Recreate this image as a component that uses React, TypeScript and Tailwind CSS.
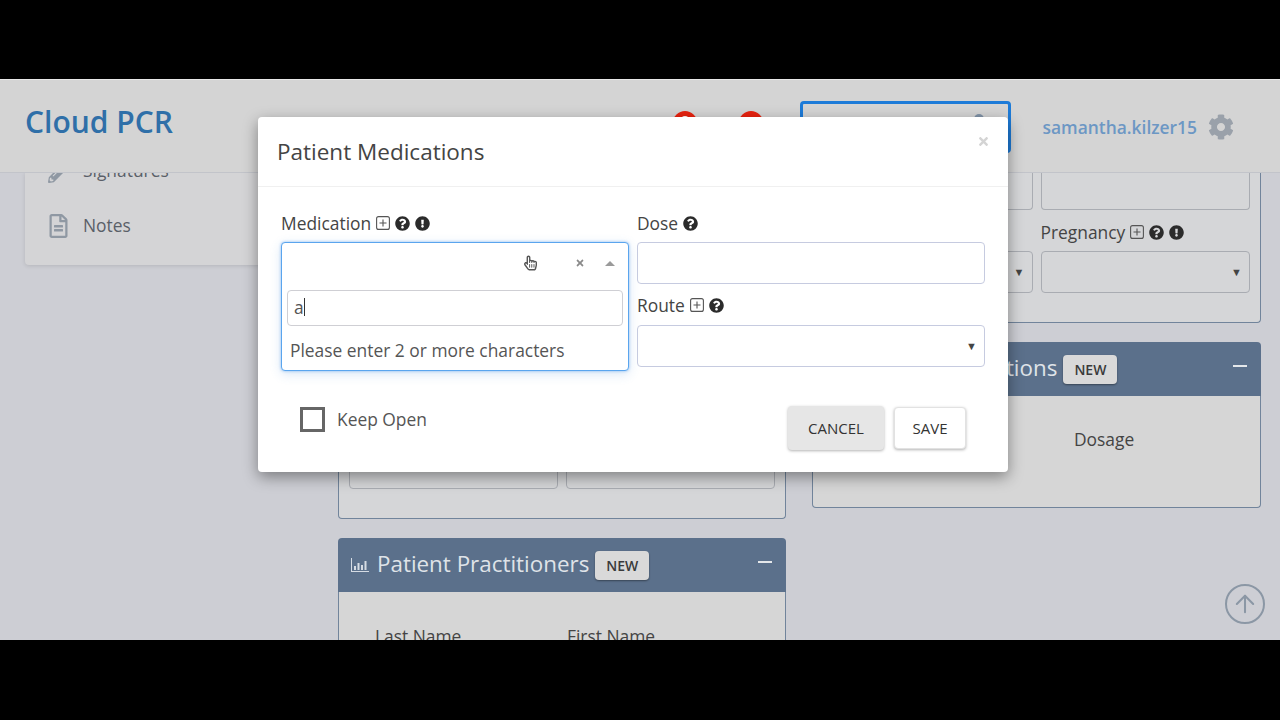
import { FaCog, FaExclamationCircle, FaPencilAlt, FaQuestionCircle, FaRegFileAlt, FaRegHandPointer, FaTimes } from "react-icons/fa";
import { ArrowUp } from "lucide-react";

function PlusBox({ className }: { className?: string }) {
  return (
    <svg viewBox="0 0 14 14" className={className} fill="none" stroke="currentColor" strokeWidth="1.1">
      <rect x="0.6" y="0.6" width="12.8" height="12.8" rx="2" />
      <path d="M3.5 7h7M7 3.5v7" />
    </svg>
  );
}

function BarsIcon() {
  return (
    <svg viewBox="0 0 18 14" className="w-[18px] h-[14px] text-[#d5dbe3]" fill="currentColor">
      <path d="M0 0h1v13h17v1H0z" />
      <path d="M3 8h2v4H3zM6.500 5h2v7h-2zM10 7h2v5h-2zM13.500 3h2v9h-2z" />
    </svg>
  );
}

function Label({ text, plus, help, alert }: { text: string; plus?: boolean; help?: boolean; alert?: boolean }) {
  return (
    <div className="flex items-center h-[20px] text-[17.4px] text-[#444]">
      <span>{text}</span>
      {plus && <PlusBox className="w-[14px] h-[14px] ml-[5px] text-[#555]" />}
      {help && <FaQuestionCircle className="w-[15px] h-[15px] ml-[5px] text-[#2b2b2b]" />}
      {alert && <FaExclamationCircle className="w-[15px] h-[15px] ml-[5px] text-[#2b2b2b]" />}
    </div>
  );
}

function SelectBox({ className }: { className: string }) {
  return (
    <div className={`h-[42px] rounded border flex items-center justify-end pr-[7px] text-[11px] ${className}`}>
      <span className="text-[#444]">▼</span>
    </div>
  );
}

function NewBadge() {
  return (
    <span className="ml-[6px] w-[54px] h-[29px] flex items-center justify-center rounded-sm bg-[#d9d9d9] text-[14px] font-semibold text-[#3a3a3a] shadow-[0_1px_2px_rgba(0,0,0,0.4)]">
      NEW
    </span>
  );
}

function PanelHeader({ title }: { title: string }) {
  return (
    <div className="h-[54px] shrink-0 bg-[#5b708b] flex items-center pl-[13px] pr-[14px] rounded-t-sm">
      <BarsIcon />
      <span className="ml-[8px] -mt-[3px] text-[22.4px] text-[#dfe3e8] whitespace-nowrap">{title}</span>
      <NewBadge />
      <span className="ml-auto w-[14px] h-[2px] bg-[#e4e7ea] -mt-[6px]" />
    </div>
  );
}

export default function App() {
  return (
    <div className="h-[720px] bg-black flex flex-col overflow-hidden font-['Open_Sans',sans-serif]">
      <div className="h-[79px] shrink-0" />
      <div className="relative h-[561px] shrink-0 overflow-hidden bg-[#cdced4] border-t border-[#e8e8e8]">
        {/* top bar */}
        <header className="relative z-10 h-[93px] bg-[#d4d4d4] border-b border-[#c2c4ca] flex items-center pl-[25px] pr-[46px]">
          <div className="-mt-[10px] text-[30px] font-semibold text-[#2f6fa8]">Cloud PCR</div>
          <div className="ml-auto mt-[2px] flex items-center">
            <span className="w-[24px] h-[24px] mb-[8px] rounded-full bg-[#e8220f] mr-[42px] pt-[5px]">
              <span className="block w-[8px] h-[8px] mx-auto rounded-full bg-white" />
            </span>
            <span className="w-[24px] h-[24px] mb-[8px] rounded-full bg-[#e8220f] mr-[37px]" />
            <div className="w-[211px] h-[52px] rounded border-[3px] border-[#1d7bd8] mr-[32px] flex items-start justify-end pr-[24px] pt-[10px]">
              <span className="w-[10px] h-[10px] rounded-full bg-[#8193a8]" />
            </div>
            <span className="text-[17.4px] font-semibold text-[#6c97c4]">samantha.kilzer15</span>
            <FaCog className="w-[26px] h-[26px] ml-[11px] text-[#9aa1aa]" />
          </div>
        </header>

        <div className="flex h-[467px] pl-[25px] overflow-hidden">
          {/* side menu */}
          <div className="w-[288px] shrink-0">
            <div className="h-[92px] bg-[#d4d4d6] rounded-b shadow-[0_1px_4px_rgba(0,0,0,0.12)] overflow-hidden flex flex-col justify-end pb-[12px] pl-[23px] text-[17.4px] text-[#5a5f68]">
              <div className="h-[55px] shrink-0 flex items-center">
                <FaPencilAlt className="w-[20px] h-[20px] mt-[4px] text-[#8f98a3]" />
                <span className="ml-[15px] -mt-[1px]">Signatures</span>
              </div>
              <div className="h-[55px] shrink-0 flex items-center">
                <FaRegFileAlt className="w-[21px] h-[24px] text-[#8f98a3]" />
                <span className="ml-[14px]">Notes</span>
              </div>
            </div>
          </div>

          {/* middle column */}
          <div className="ml-[25px] w-[448px] shrink-0 flex flex-col gap-[19px]">
            <div className="h-[346px] shrink-0 bg-[#d5d6d8] border border-t-0 border-[#71849b] rounded-b flex flex-col justify-end px-[10px] pb-[29px]">
              <div className="grid grid-cols-2 gap-x-[8px]">
                <div className="h-[42px] rounded border border-[#a9acb2]" />
                <div className="h-[42px] rounded border border-[#a9acb2]" />
              </div>
            </div>
            <div className="shrink-0 rounded-t-sm">
              <PanelHeader title="Patient Practitioners" />
              <div className="h-[60px] bg-[#d6d6d6] border-x border-[#71849b] pt-[31px] pl-[36px] flex text-[17.4px] text-[#444]">
                <span className="w-[192px]">Last Name</span>
                <span>First Name</span>
              </div>
            </div>
          </div>

          {/* right column */}
          <div className="ml-[26px] w-[449px] shrink-0 flex flex-col gap-[19px]">
            <div className="h-[150px] shrink-0 bg-[#d5d6d8] border border-t-0 border-[#71849b] rounded-b flex flex-col justify-end px-[10px] pb-[29px]">
              <div className="grid grid-cols-2 gap-x-[8px]">
                <div className="h-[37px] rounded-b border border-t-0 border-[#a9acb2]" />
                <div className="h-[37px] rounded-b border border-t-0 border-[#a9acb2]" />
                <div className="mt-[12px] h-[29px]" />
                <div className="mt-[12px] h-[29px]">
                  <Label text="Pregnancy" plus help alert />
                </div>
                <SelectBox className="border-[#a9acb2]" />
                <SelectBox className="border-[#a9acb2]" />
              </div>
            </div>
            <div className="shrink-0">
              <PanelHeader title="Patient Medications" />
              <div className="h-[112px] bg-[#d6d6d6] border border-t-0 border-[#71849b] rounded-b pt-[30px] pl-[261px] text-[17.4px] text-[#444]">
                Dosage
              </div>
            </div>
          </div>
        </div>

        {/* back to top */}
        <div className="absolute left-[1225px] top-[504px] w-[40px] h-[40px] rounded-full border-2 border-[#8b97a5] flex items-center justify-center">
          <ArrowUp className="w-[28px] h-[28px] text-[#8b97a5]" strokeWidth={1.75} />
        </div>

        {/* modal */}
        <div className="absolute z-20 left-[258px] top-[37px] w-[750px] h-[355px] bg-white rounded-sm shadow-[0_5px_15px_rgba(0,0,0,0.4)] flex flex-col">
          <div className="h-[70px] shrink-0 border-b border-[#f0f0f0] flex items-start justify-between pl-[19px] pr-[18px]">
            <h2 className="mt-[18px] text-[22.5px] text-[#444]">Patient Medications</h2>
            <FaTimes className="mt-[18px] w-[13px] h-[13px] text-[#d4d4d4]" />
          </div>
          <div className="relative flex-1">
            <div className="flex pl-[23px] gap-[8px] pt-[26px]">
              <div className="w-[348px]">
                <Label text="Medication" plus help alert />
                <div className="mt-[9px] h-[129px] rounded border border-[#5aa5ee] shadow-[0_0_3px_rgba(70,150,235,0.6),0_3px_12px_rgba(60,130,210,0.2)] bg-white px-[5px]">
                  <div className="h-[40px] flex items-center justify-end pr-[8px]">
                    <FaRegHandPointer className="w-[13px] h-[16px] text-[#555] mr-[38px]" />
                    <FaTimes className="w-[10px] h-[10px] text-[#8a8a8a] mr-[20px]" />
                    <span className="w-0 h-0 border-x-[5px] border-x-transparent border-b-[5px] border-b-[#9a9a9a]" />
                  </div>
                  <div className="mt-[7px] h-[36px] rounded border border-[#cfcfd4] flex items-center pl-[6px] pb-[2px] text-[17.4px] text-[#555]">
                    <span>a</span>
                    <span className="w-px h-[18px] bg-[#333]" />
                  </div>
                  <div className="mt-[11px] pl-[3px] text-[17.4px] text-[#555]">Please enter 2 or more characters</div>
                </div>
              </div>
              <div className="w-[348px]">
                <Label text="Dose" help />
                <div className="mt-[9px] h-[42px] rounded border border-[#c6cbe0]" />
                <div className="mt-[11px]">
                  <Label text="Route" plus help />
                </div>
                <SelectBox className="mt-[10px] border-[#c6cbe0]" />
              </div>
            </div>
            <div className="absolute left-[42px] right-[42px] bottom-[22px] flex items-start justify-between">
              <label className="flex items-center text-[17.4px] text-[#555]">
                <span className="w-[25px] h-[25px] border-[3px] border-[#666]" />
                <span className="ml-[12px]">Keep Open</span>
              </label>
              <div className="flex items-center">
                <button className="w-[96px] h-[44px] rounded-sm bg-[#e6e6e6] text-[15px] text-[#333] shadow-[0_1px_3px_rgba(0,0,0,0.3)]">CANCEL</button>
                <button className="ml-[10px] w-[72px] h-[42px] rounded-sm bg-white border border-[#e2e2e2] text-[15px] text-[#333] shadow-[0_1px_3px_rgba(0,0,0,0.3)]">SAVE</button>
              </div>
            </div>
          </div>
        </div>
      </div>
      <div className="flex-1" />
    </div>
  );
}
